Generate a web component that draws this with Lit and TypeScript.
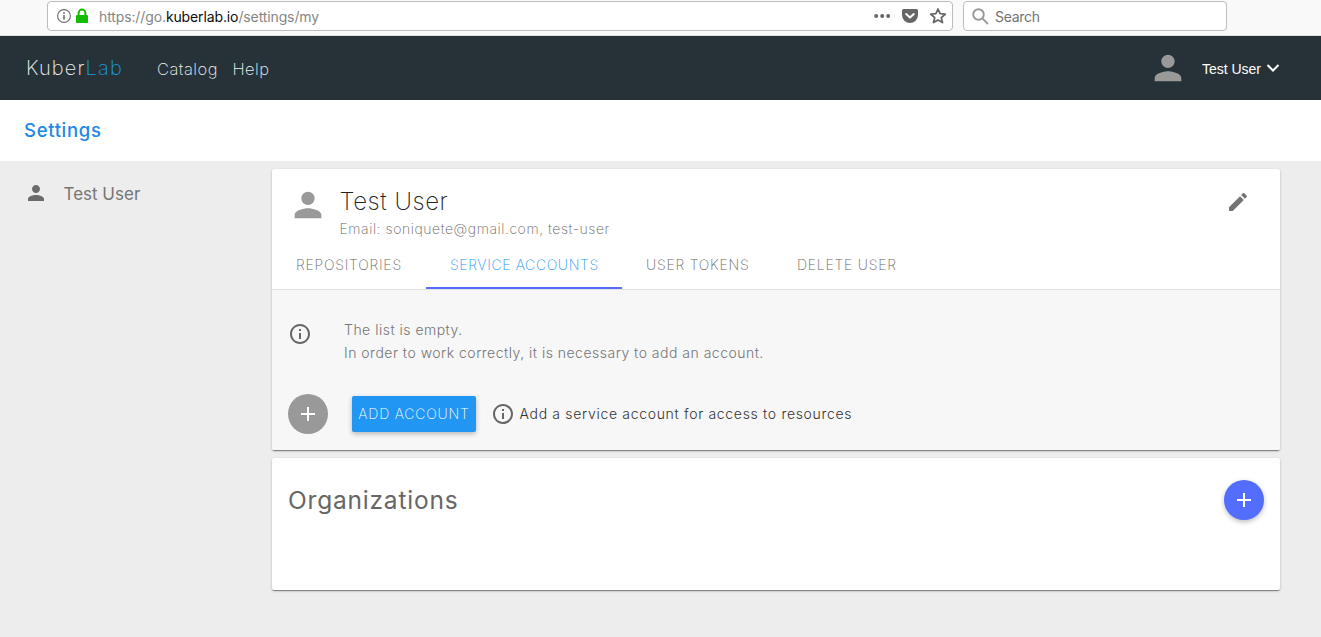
import { LitElement, html, css, svg } from "lit";
import { customElement, property } from "lit/decorators.js";

const PATHS: Record<string, string> = {
  person: "M12 12c2.21 0 4-1.79 4-4s-1.79-4-4-4-4 1.79-4 4 1.79 4 4 4zm0 2c-2.67 0-8 1.34-8 4v2h16v-2c0-2.66-5.33-4-8-4z",
  info: "M11 17h2v-6h-2v6zm1-15C6.48 2 2 6.48 2 12s4.48 10 10 10 10-4.48 10-10S17.52 2 12 2zm0 18c-4.41 0-8-3.59-8-8s3.59-8 8-8 8 3.59 8 8-3.59 8-8 8zM11 9h2V7h-2v2z",
  edit: "M3 17.25V21h3.75L17.81 9.94l-3.75-3.75L3 17.25zM20.71 7.04c.39-.39.39-1.02 0-1.41l-2.34-2.34c-.39-.39-1.02-.39-1.41 0l-1.83 1.83 3.75 3.75 1.83-1.83z",
  add: "M19 13h-6v6h-2v-6H5v-2h6V5h2v6h6v2z",
};

@customElement("ui-icon")
export class UiIcon extends LitElement {
  @property() name = "person";
  static styles = css`
    :host { display: block; width: 24px; height: 24px; flex: none; }
    svg { display: block; width: 100%; height: 100%; fill: currentColor; }
  `;
  render() {
    return html`<svg viewBox="0 0 24 24">${svg`<path d=${PATHS[this.name]} />`}</svg>`;
  }
}

@customElement("browser-bar")
export class BrowserBar extends LitElement {
  static styles = css`
    :host { display: flex; box-sizing: border-box; height: 36px; padding: 1px 94px 0 47px; gap: 10px; align-items: flex-start;
      background: #f9f9fa; border-bottom: 1px solid #e0e0e1; font: 14px/18px Inter, sans-serif; }
    .field { box-sizing: border-box; height: 30px; border: 1px solid #bdbdbd; border-radius: 4px; background: #fff; display: flex; align-items: center; }
    .url { flex: 1; padding: 0 5px 0 9px; color: #858585; }
    .url b { font-weight: 400; color: #0c0c0d; }
    .address { flex: 1; padding: 2px 0 0 10px; letter-spacing: -0.12px; }
    .search { width: 264px; padding-left: 8px; color: #737373; }
    .search span { padding: 2px 0 0 6px; letter-spacing: -0.3px; }
    svg { display: block; flex: none; }
    .lock { margin-left: 4px; }
    .dots { margin-right: -1px; }
    .pocket { margin-left: 12px; }
    .star { margin-left: 11px; }
  `;
  render() {
    return html`
      <div class="field url">
        <svg width="14" height="14" viewBox="0 0 14 14"><circle cx="7" cy="7" r="6.4" fill="none" stroke="#6b6b6b" stroke-width="1.1"/><rect x="6.2" y="6" width="1.6" height="4.6" fill="#6b6b6b"/><rect x="6.2" y="3.2" width="1.6" height="1.7" fill="#6b6b6b"/></svg>
        <svg class="lock" width="14" height="16" viewBox="0 0 14 16"><path d="M3.6 8V5a3.4 3.4 0 0 1 6.8 0v3" fill="none" stroke="#12bc00" stroke-width="2"/><rect x="1" y="7" width="12" height="8" rx="1" fill="#12bc00"/></svg>
        <div class="address">https://go.<b>kuberlab.io</b>/settings/my</div>
        <svg class="dots" width="17" height="16" viewBox="0 0 17 16" fill="#666"><circle cx="2.2" cy="8" r="2"/><circle cx="8.2" cy="8" r="2"/><circle cx="14.2" cy="8" r="2"/></svg>
        <svg class="pocket" width="16" height="16" viewBox="0 0 16 16"><path d="M1.5 1h13A1.5 1.5 0 0 1 16 2.500V7a8 8 0 0 1-16 0V2.500A1.500 1.500 0 0 1 1.500 1z" fill="#666"/><path d="M4.200 6 8 9.600 11.800 6" fill="none" stroke="#fff" stroke-width="2" stroke-linecap="round" stroke-linejoin="round"/></svg>
        <svg class="star" width="18" height="18" viewBox="0 0 18 18"><path d="M9 2l2.100 4.700 5.100.5-3.900 3.400 1.200 5L9 12.900l-4.500 2.700 1.200-5L1.800 7.200l5.100-.5z" fill="none" stroke="#666" stroke-width="1.800" stroke-linejoin="round"/></svg>
      </div>
      <div class="field search">
        <svg width="17" height="17" viewBox="0 0 17 17" fill="none" stroke="#999" stroke-width="1.900"><circle cx="6.500" cy="6.500" r="5.300"/><path d="M10.300 10.300 16 16"/></svg>
        <span>Search</span>
      </div>`;
  }
}

@customElement("app-root")
export class AppRoot extends LitElement {
  static styles = css`
    :host { display: flex; flex-direction: column; height: 637px; overflow: hidden; background: #ededed; font-family: Inter, sans-serif; font-weight: 300; }
    .top { height: 64px; flex: none; background: #273238; color: #f2f2f2; display: flex; align-items: center; padding: 0 41px 0 26px; }
    .brand { font-size: 20px; width: 131px; letter-spacing: 1.15px; font-weight: 200; }
    .brand span { color: #1c9be0; }
    .nav { font-size: 16.5px; letter-spacing: 0.5px; font-weight: 200; display: flex; gap: 14.5px; flex: 1; padding-top: 2px; }
    .avatar { width: 40px; height: 40px; color: #999; }
    .top .avatar { margin-right: 14px; }
    .user { font: 400 14px/20px "Liberation Sans", sans-serif; color: #fff; padding-top: 2px; }
    .chev { display: block; margin-left: 5px; }
    .bar { height: 61px; box-sizing: border-box; flex: none; background: #fff; padding: 0 24px 2px; display: flex; align-items: center; color: #1e88e5; font-size: 18.5px; font-weight: 500; letter-spacing: 0.68px; }
    .body { flex: 1; display: flex; }
    .side { width: 272px; box-sizing: border-box; padding: 20px 23.5px; display: flex; gap: 16px; align-items: flex-start; color: #757575; font-size: 17px; line-height: 26px; font-weight: 400; }
    .side ui-icon { color: #6b6b6b; }
    .main { width: 1008px; padding-top: 8px; display: flex; flex-direction: column; gap: 8px; }
    .card { background: #fff; border-radius: 2px; box-shadow: 0 1px 3px rgba(0,0,0,.2), 0 1px 1px rgba(0,0,0,.14), 0 2px 1px -1px rgba(0,0,0,.3); overflow: hidden; }
    .accounts { height: 281px; display: flex; flex-direction: column; }
    .head { height: 72px; display: flex; box-sizing: border-box; padding: 16px 30px 0 16px; }
    .who { flex: 1; padding-left: 11.5px; }
    .name { font-size: 24px; line-height: 34px; height: 32px; color: #222; letter-spacing: 0.55px; font-weight: 200; }
    .mail { font-size: 14px; line-height: 24px; color: #666; font-weight: 200; letter-spacing: 0.57px; }
    .head .pen { color: #737373; margin-top: 4.5px; }
    .tabs { height: 48px; display: grid; grid-template-columns: 154px 196px 151px 149px; border-bottom: 1px solid #e0e0e0; font-size: 14px; letter-spacing: 0.77px; color: #666; font-weight: 200; }
    .tab { box-sizing: border-box; height: 48px; padding-left: 24px; line-height: 48px; white-space: nowrap; }
    .active { color: #2196f3; border-bottom: 2px solid #536dfe; letter-spacing: 0.63px; }
    .pane { flex: 1; background: #f7f7f7; padding: 28px 16px 0; }
    .empty { display: flex; gap: 32px; line-height: 23px; font-size: 14px; color: #757575; letter-spacing: 0.49px; }
    .empty ui-icon, .hint ui-icon { color: #666; }
    .empty ui-icon { margin-top: 4px; }
    .actions { display: flex; align-items: center; margin-top: 30px; }
    .round { width: 40px; height: 40px; border-radius: 50%; display: grid; place-items: center; color: #fff; background: #999; }
    .btn { box-sizing: border-box; width: 124px; height: 36px; margin: 0 15px 0 24px; border-radius: 2px; background: #2196f3; color: #fff; font-size: 14px; line-height: 36px; text-align: center; white-space: nowrap; box-shadow: 0 2px 5px rgba(0,0,0,.26); font-weight: 200; letter-spacing: 0.8px; }
    .hint { display: flex; align-items: center; gap: 4.5px; color: #333; font-size: 14px; letter-spacing: 0.68px; }
    .hint span { padding-bottom: 2px; }
    .orgs { height: 132px; box-sizing: border-box; padding: 22px 16px; display: flex; justify-content: space-between; align-items: flex-start; }
    .orgs h2 { margin: 0; font-size: 24.5px; line-height: 40px; color: #666; font-weight: 400; letter-spacing: 0.8px; }
    .orgs .round { background: #536dfe; box-shadow: 0 2px 5px rgba(0,0,0,.26); }
  `;
  render() {
    const tabs = ["REPOSITORIES", "SERVICE ACCOUNTS", "USER TOKENS", "DELETE USER"];
    return html`
      <browser-bar></browser-bar>
      <header class="top">
        <div class="brand">Kuber<span>Lab</span></div>
        <nav class="nav"><span>Catalog</span><span>Help</span></nav>
        <ui-icon class="avatar"></ui-icon>
        <span class="user">Test User</span>
        <svg class="chev" width="14" height="10" viewBox="0 0 14 10"><path d="M1.500 2 7 7.500l5.500-5.500" fill="none" stroke="#fff" stroke-width="2"/></svg>
      </header>
      <div class="bar">Settings</div>
      <div class="body">
        <aside class="side"><ui-icon></ui-icon><span>Test User</span></aside>
        <main class="main">
          <section class="card accounts">
            <div class="head">
              <ui-icon class="avatar"></ui-icon>
              <div class="who"><div class="name">Test User</div><div class="mail">Email: soniquete@gmail.com, test-user</div></div>
              <ui-icon class="pen" name="edit"></ui-icon>
            </div>
            <div class="tabs">${tabs.map((t, i) => html`<div class="tab ${i === 1 ? "active" : ""}">${t}</div>`)}</div>
            <div class="pane">
              <div class="empty"><ui-icon name="info"></ui-icon><div>The list is empty.<br />In order to work correctly, it is necessary to add an account.</div></div>
              <div class="actions">
                <div class="round"><ui-icon name="add"></ui-icon></div>
                <div class="btn">ADD ACCOUNT</div>
                <div class="hint"><ui-icon name="info"></ui-icon><span>Add a service account for access to resources</span></div>
              </div>
            </div>
          </section>
          <section class="card orgs"><h2>Organizations</h2><div class="round"><ui-icon name="add"></ui-icon></div></section>
        </main>
      </div>`;
  }
}
